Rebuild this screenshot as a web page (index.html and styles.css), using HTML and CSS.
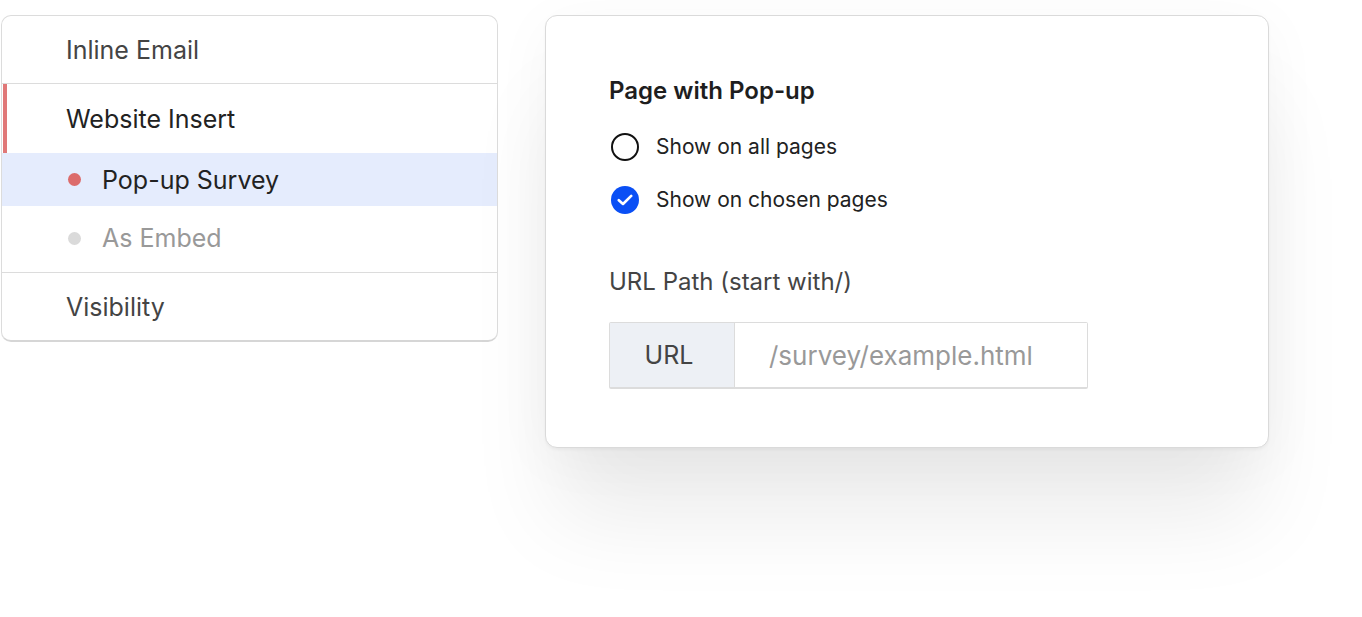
FILE: index.html
```html
<!DOCTYPE html>
<html lang="en">
<head>
    <meta charset="UTF-8">
    <meta name="viewport" content="width=device-width, initial-scale=1.0">
    <title>Website Insert - Visibility</title>
    <link rel="stylesheet" href="styles.css">
</head>
<body>

    <div class="stage">
        <!-- Left side menu -->
        <div class="menu">
            <div class="menu-item">Inline Email</div>
            <div class="menu-group">
                <div class="menu-item active">Website Insert</div>
                <div class="sub-item selected"><span class="dot"></span>Pop-up Survey</div>
                <div class="sub-item muted"><span class="dot"></span>As Embed</div>
            </div>
            <div class="menu-item">Visibility</div>
        </div>

        <!-- Settings card -->
        <div class="panel">
            <div class="panel-title">Page with Pop-up</div>

            <div class="radio-row">
                <span class="radio"></span>
                <span>Show on all pages</span>
            </div>
            <div class="radio-row">
                <span class="radio checked">
                    <svg width="16" height="12" viewBox="0 0 16 12"><path d="M1.8 6.2 L6 10 L14.2 1.9" fill="none" stroke="#fff" stroke-width="2.6" stroke-linecap="round" stroke-linejoin="round"/></svg>
                </span>
                <span>Show on chosen pages</span>
            </div>

            <div class="field-label">URL Path (start with/)</div>
            <div class="url-group">
                <div class="url-prefix">URL</div>
                <input class="url-input" type="text" placeholder="/survey/example.html">
            </div>
        </div>
    </div>

</body>
</html>
```

FILE: styles.css
```css
body {
    margin: 0;
    font-family: Inter, "Open Sans", Arial, sans-serif;
    background-color: #fff;
}
.stage {
    display: flex;
    align-items: flex-start;
    gap: 47px;
    min-height: 617px;
    box-sizing: border-box;
    padding: 15px 0 0 1px;
}
.menu {
    width: 495px;
    border: 1px solid #dcdcdc;
    border-bottom: 2px solid #d6d6d6;
    border-radius: 10px;
    background-color: #fff;
    overflow: hidden;
}
.menu-item {
    height: 67px;
    display: flex;
    align-items: center;
    padding-left: 64px;
    font-size: 25px;
    color: #444;
}
.menu-group {
    border-top: 1px solid #dcdcdc;
    border-bottom: 1px solid #dcdcdc;
}
.menu-item.active {
    height: 69px;
    color: #222;
    box-shadow: inset 4px 0 0 #e07878;
    margin-left: 1px;
    padding-left: 63px;
}
.sub-item {
    height: 53px;
    display: flex;
    align-items: center;
    padding-left: 66px;
    font-size: 25px;
    color: #222;
}
.sub-item.muted {
    height: 64px;
    padding-bottom: 2px;
    color: #999;
}
.sub-item.selected {
    background-color: #e5ecfd;
}
.dot {
    width: 13px;
    height: 13px;
    border-radius: 50%;
    background-color: #dc6b6b;
    margin-right: 21px;
}
.muted .dot {
    background-color: #dadada;
}
.panel {
    width: 659px;
    padding: 60px 0 58px 63px;
    border: 1px solid #dadada;
    border-radius: 12px;
    background-color: #fff;
    box-shadow: 0 80px 90px -10px rgba(0, 0, 0, 0.08), 0 10px 60px rgba(0, 0, 0, 0.04), 0 2px 3px rgba(0, 0, 0, 0.04);
}
.panel-title {
    font-size: 24px;
    font-weight: 600;
    color: #1e1e1e;
    margin-bottom: 15px;
}
.radio-row {
    display: flex;
    align-items: center;
    height: 53px;
    font-size: 21px;
    color: #222;
}
.radio {
    width: 28px;
    height: 28px;
    box-sizing: border-box;
    border: 2px solid #111;
    border-radius: 50%;
    margin: 0 17px 0 2px;
    display: flex;
    align-items: center;
    justify-content: center;
}
.radio.checked {
    border: none;
    background-color: #0a4ff5;
}
.field-label {
    margin-top: 41px;
    font-size: 24px;
    color: #444;
}
.url-group {
    display: flex;
    width: 477px;
    height: 64px;
    margin-top: 26px;
    border: 1px solid #dcdcdc;
    border-bottom-width: 2px;
    border-radius: 2px;
}
.url-prefix {
    width: 125px;
    display: flex;
    align-items: center;
    justify-content: center;
    padding-right: 6px;
    box-sizing: border-box;
    background-color: #edf0f5;
    border-right: 1px solid #dcdcdc;
    font-size: 25px;
    color: #444;
}
.url-input {
    flex: 1;
    min-width: 0;
    border: none;
    outline: none;
    padding: 0 0 0 34px;
    font-family: inherit;
    font-size: 26px;
    color: #333;
    background: #fff;
}
.url-input::placeholder {
    color: #999;
}
```
